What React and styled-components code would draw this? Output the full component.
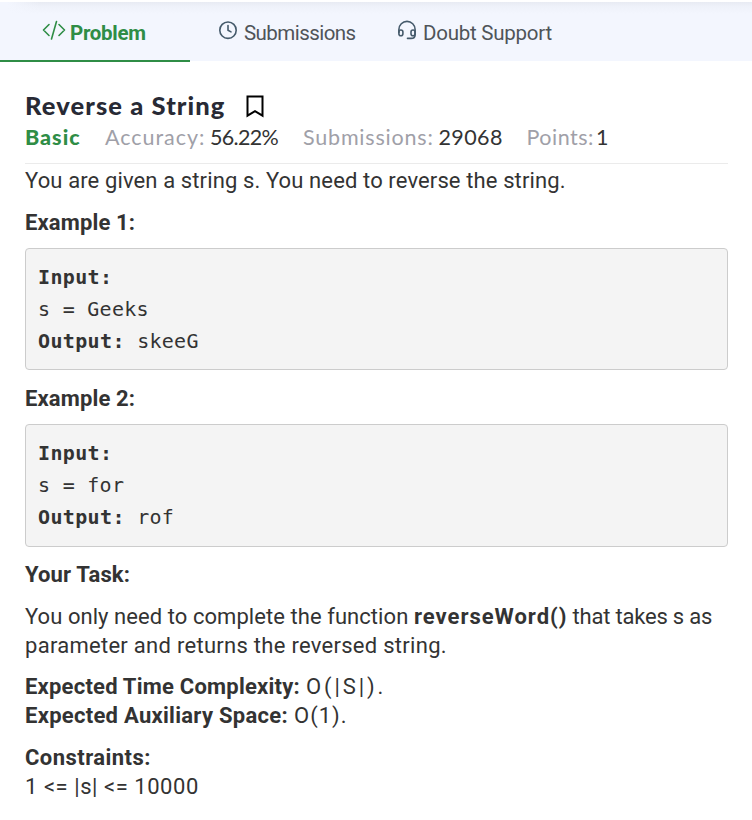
import React from 'react';
import styled, { createGlobalStyle } from 'styled-components';

const GlobalStyle = createGlobalStyle`
  * { box-sizing: border-box; }
  body { margin: 0; background: #fff; color: #333; overflow: hidden; }
`;

const Page = styled.div`
  width: 752px;
  height: 820px;
  padding-top: 2px;
  display: flex;
  flex-direction: column;
  overflow: hidden;
`;

const TabBar = styled.nav`
  display: flex;
  flex: none;
  height: 60px;
  background:
    linear-gradient(to right, #f3f6fe 8px, rgba(243, 246, 254, 0) 40px) 0 0 / 100% 59px no-repeat,
    linear-gradient(#e8ebf3, #eff2fa 5px, #f3f6fe 12px) 0 0 / 100% 59px no-repeat;
`;

const Tab = styled.a`
  display: flex;
  width: ${(p) => p.$width}px;
  padding-left: ${(p) => p.$inset}px;
  color: ${(p) => (p.$active ? '#2f8d46' : '#4f5459')};
  border-bottom: 2px solid ${(p) => (p.$active ? '#2f8d46' : 'transparent')};
  font: ${(p) => (p.$active ? 700 : 400)} 20.5px/30px Roboto, sans-serif;
  letter-spacing: ${(p) => p.$spacing}px;
  white-space: nowrap;
`;

const TabIcon = styled.svg`
  flex: none;
  width: ${(p) => p.$width || 20}px;
  height: 20px;
  margin: 18px ${(p) => p.$gap}px 0 0;
  fill: none;
  stroke: ${(p) => (p.$active ? '#2f8d46' : '#455a6b')};
  stroke-width: 1.6;
  stroke-linecap: round;
  stroke-linejoin: round;
`;

const TabLabel = styled.span`
  padding-top: 16px;
`;

const Content = styled.main`
  padding: 29px 24px 0 25px;
`;

const TitleRow = styled.div`
  display: flex;
  align-items: flex-start;
  height: 31px;
`;

const Title = styled.h1`
  width: 221px;
  margin: -1px 0 0;
  font: 900 25.5px/30px Lato, sans-serif;
  letter-spacing: 1.1px;
  color: #282a35;
  white-space: nowrap;
`;

const Bookmark = styled.svg`
  width: 18px;
  height: 23px;
  margin-top: 4px;
  fill: none;
  stroke: #000;
  stroke-width: 2;
`;

const Stats = styled.div`
  display: flex;
  height: 42px;
  border-bottom: 1px solid #ebebeb;
  font: 400 21.5px/30px Lato, sans-serif;
  white-space: nowrap;
`;

const Stat = styled.span`
  flex: none;
  width: ${(p) => p.$width}px;
  letter-spacing: ${(p) => p.$spacing}px;
  color: ${(p) => p.$color || '#333'};
  font-weight: ${(p) => (p.$bold ? 900 : 400)};
`;

const Body = styled.section`
  padding-top: 2px;
`;

const Heading = styled.h2`
  margin: 0 0 11px;
  font: 700 22px/29px Roboto, sans-serif;
  letter-spacing: 0.14px;
`;

const TaskHeading = styled(Heading)`
  margin-bottom: 13px;
`;

const Paragraph = styled.p`
  margin: 0 0 ${(p) => p.$gap || 13}px;
  font: 400 22px/29px Roboto, sans-serif;
  white-space: nowrap;
`;

const Line = styled.span`
  display: flex;
`;

const Run = styled.span`
  flex: none;
  width: ${(p) => (p.$width ? `${p.$width}px` : 'auto')};
  letter-spacing: ${(p) => p.$spacing}px;
  font-weight: ${(p) => (p.$bold ? 700 : 400)};
`;

const CodeBlock = styled.pre`
  margin: 0 0 ${(p) => p.$gap}px;
  height: ${(p) => p.$height}px;
  padding: 12px 12px 0;
  background: #f4f4f4;
  border: 1px solid #ccc;
  border-radius: 4px;
  font: 400 20px/32px 'DejaVu Sans Mono', monospace;
  letter-spacing: 0.28px;

  b { letter-spacing: 0.36px; }
`;

const Example = ({ n, input, output, height, gap }) => (
  <>
    <Heading>{`Example ${n}:`}</Heading>
    <CodeBlock $height={height} $gap={gap}>
      <b>Input:</b>{`\ns = ${input}\n`}<b>Output:</b>{` ${output}`}
    </CodeBlock>
  </>
);

export default function App() {
  return (
    <Page>
      <GlobalStyle />
      <TabBar>
        <Tab $active $width={190} $inset={42} $spacing={-0.3}>
          <TabIcon $active $width={24} $gap={4} viewBox="0 0 24 20">
            <path d="M7 4.5 1.5 10 7 15.5M14.5 1.5 9.5 19M17 4.5 22.5 10 17 15.5" />
          </TabIcon>
          <TabLabel>Problem</TabLabel>
        </Tab>
        <Tab $width={190} $inset={28} $spacing={-0.55}>
          <TabIcon $gap={6} viewBox="0 0 20 20">
            <circle cx="10" cy="10.2" r="8.2" />
            <path d="M10 5.5v4.8l3 1.6" />
          </TabIcon>
          <TabLabel>Submissions</TabLabel>
        </Tab>
        <Tab $width={190} $inset={17} $spacing={-0.24}>
          <TabIcon $gap={6} viewBox="0 0 20 20">
            <path d="M1.9 12.4V9.5a8.1 8.1 0 0 1 16.2 0v5.2q0 3.7-4.1 3.7h-3.5" />
            <rect x="1.9" y="10" width="4" height="5.8" rx="2" />
            <rect x="14" y="10" width="4" height="5.8" rx="2" />
          </TabIcon>
          <TabLabel>Doubt Support</TabLabel>
        </Tab>
      </TabBar>
      <Content>
        <TitleRow>
          <Title>Reverse a String</Title>
          <Bookmark viewBox="0 0 18 23">
            <path d="M1.5 1.5h15v19.2L9 16.2l-7.5 4.5z" />
          </Bookmark>
        </TitleRow>
        <Stats>
          <Stat $bold $width={80} $spacing={1} $color="#2f8d46">Basic</Stat>
          <Stat $width={105} $spacing={0.97} $color="#a0a0a8">Accuracy:</Stat>
          <Stat $width={93} $spacing={-0.7}>56.22%</Stat>
          <Stat $width={135.5} $spacing={0.8} $color="#a0a0a8">Submissions:</Stat>
          <Stat $width={88} $spacing={0.4}>29068</Stat>
          <Stat $width={69.5} $spacing={0.5} $color="#a0a0a8">Points:</Stat>
          <Stat $spacing={0}>1</Stat>
        </Stats>
        <Body>
          <Paragraph><Run $spacing={0.12}>You are given a string s. You need to reverse the string.</Run></Paragraph>
          <Example n={1} input="Geeks" output="skeeG" height={122} gap={14} />
          <Example n={2} input="for" output="rof" height={123} gap={13} />
          <TaskHeading>Your Task:</TaskHeading>
          <Paragraph $gap={12}>
            <Line>
              <Run $width={389} $spacing={0.06}>You only need to complete the function </Run>
              <Run $bold $width={158.5} $spacing={0.98}>reverseWord()</Run>
              <Run $spacing={-0.2}>that takes s as</Run>
            </Line>
            <Line><Run $spacing={0.28}>parameter and returns the reversed string.</Run></Line>
          </Paragraph>
          <Paragraph>
            <Line>
              <Run $bold $width={281} $spacing={0.22}>Expected Time Complexity:</Run>
              <Run $spacing={2.9}>O(|S|).</Run>
            </Line>
            <Line>
              <Run $bold $width={269} $spacing={0.28}>Expected Auxiliary Space:</Run>
              <Run $spacing={1}>O(1).</Run>
            </Line>
          </Paragraph>
          <Paragraph>
            <Line><Run $bold $spacing={0.45}>Constraints:</Run></Line>
            <Line><Run $spacing={0.54}>{'1 <= |s| <= 10000'}</Run></Line>
          </Paragraph>
        </Body>
      </Content>
    </Page>
  );
}
